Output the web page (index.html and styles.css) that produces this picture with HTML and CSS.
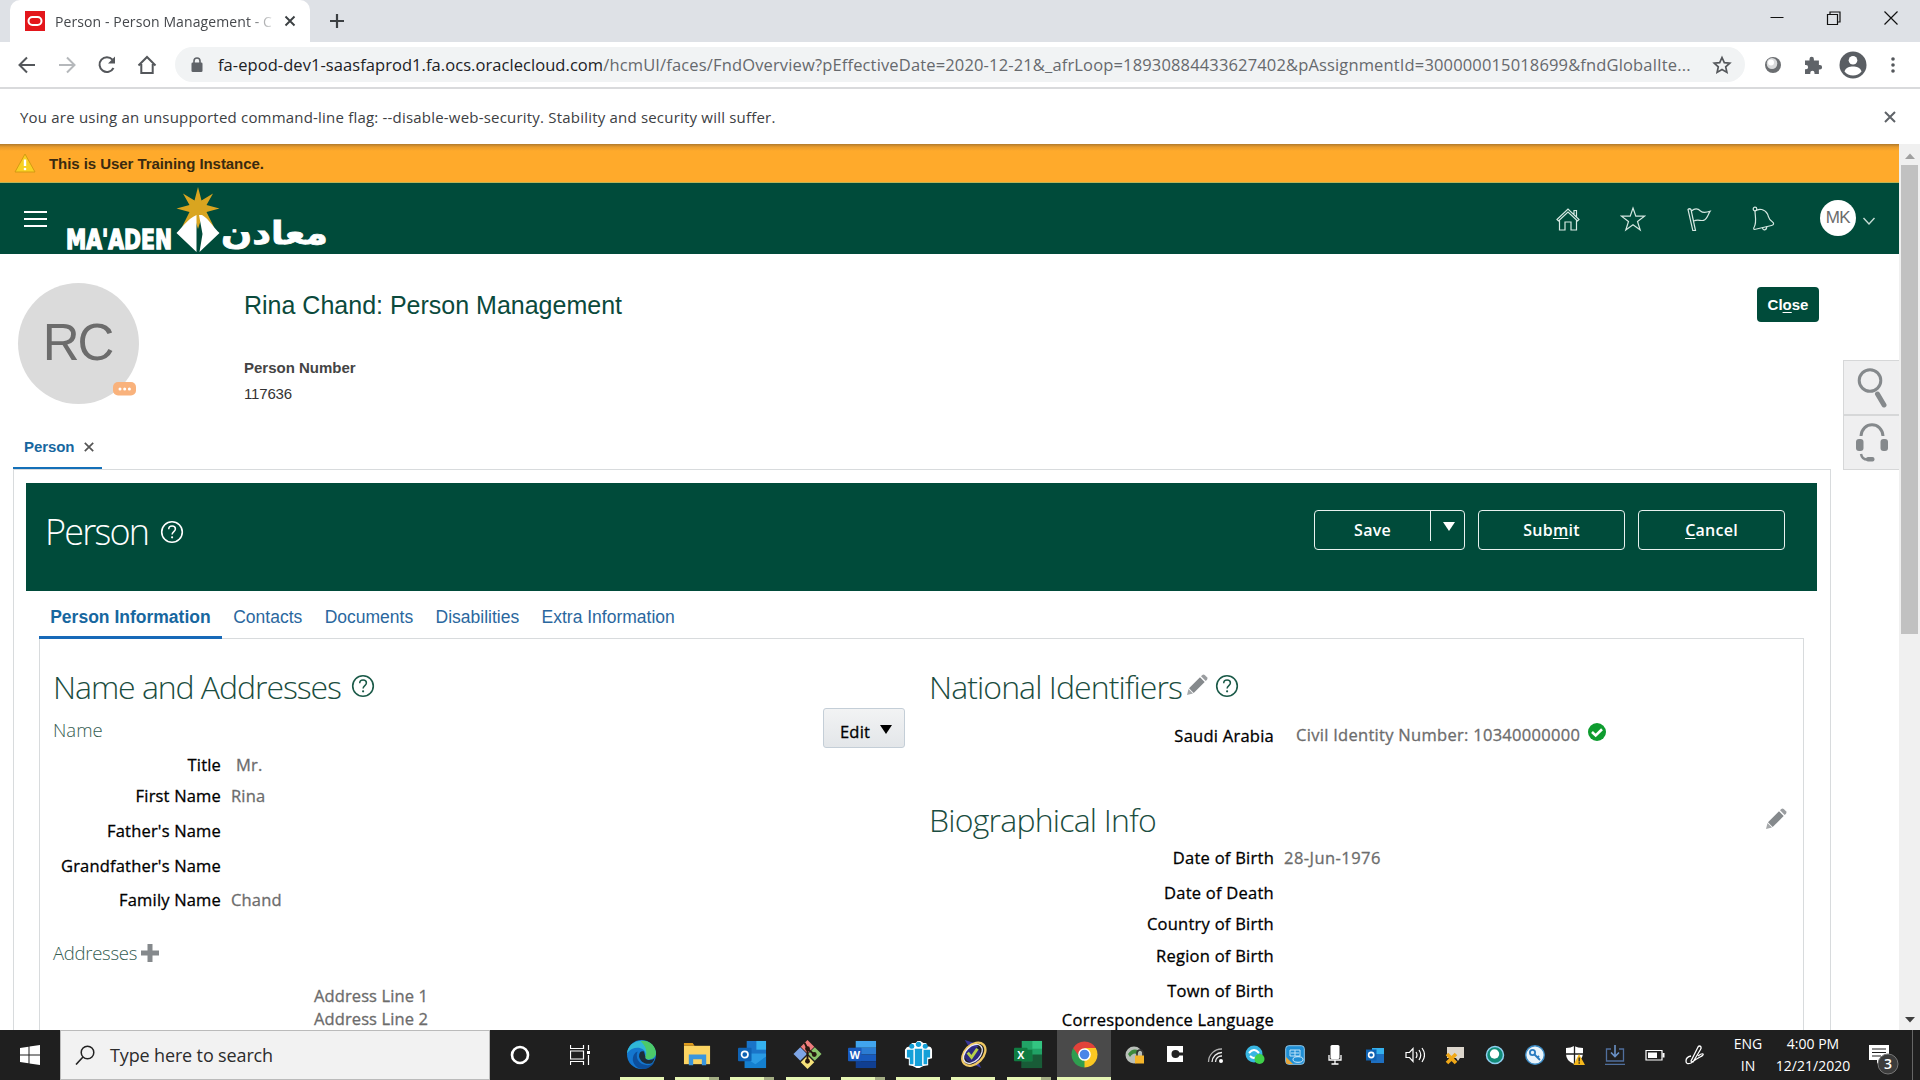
FILE: index.html
```html
<!DOCTYPE html>
<html lang="en">
<head>
<meta charset="utf-8">
<title>Person - Person Management</title>
<link rel="stylesheet" href="styles.css">
</head>
<body>
<svg class="defs" width="0" height="0">
  <symbol id="pencil" viewBox="0 0 22 22"><path d="M1 21l1.500-6 4.500 4.500z" fill="#a5a8aa"/><path d="M3 14.300L14 3.300l4.700 4.700-11 11z" fill="#85898c"/><path d="M15 2.300l1.300-1.300q1.200-1 2.400 0l2.300 2.300q1 1.200 0 2.400L19.700 7z" fill="#9a9da0"/></symbol>
  <symbol id="help" viewBox="0 0 24 24"><circle cx="12" cy="12" r="10.300" fill="none" stroke="currentColor" stroke-width="1.600"/><path d="M8.700 9.300c0-2 1.500-3.200 3.400-3.200s3.300 1.200 3.300 2.900c0 2.500-3.300 2.700-3.300 5.500" fill="none" stroke="currentColor" stroke-width="1.500"/><circle cx="12.100" cy="17.300" r="1.100" fill="currentColor"/></symbol>
</svg>
<div class="screen">
  <header class="tabstrip">
    <div class="tab">
      <svg class="favicon" viewBox="0 0 20 20"><rect width="20" height="20" fill="#e3161b"/><rect x="3.500" y="6" width="13" height="8" rx="4" fill="none" stroke="#fff" stroke-width="2"/></svg>
      <span class="tab-title">Person - Person Management - C</span>
      <svg class="tab-x" viewBox="0 0 12 12"><path d="M1.500 1.500l9 9M10.500 1.500l-9 9" stroke="#3c4043" stroke-width="1.900"/></svg>
    </div>
    <svg class="newtab" viewBox="0 0 16 16"><path d="M8 1v14M1 8h14" stroke="#3c4043" stroke-width="2.200"/></svg>
    <div class="wincontrols">
      <svg viewBox="0 0 16 16"><path d="M1.500 7.500h13" stroke="#111" stroke-width="1"/></svg>
      <svg viewBox="0 0 16 16"><path d="M1.500 4.500h10v10h-10zM4 4.500v-2.500h10v10h-2.500" fill="none" stroke="#111" stroke-width="1.200"/></svg>
      <svg viewBox="0 0 16 16"><path d="M1.500 1.500l13 13M14.500 1.500l-13 13" stroke="#111" stroke-width="1.200"/></svg>
    </div>
  </header>
  <div class="toolbar">
    <div class="navbtns">
      <svg viewBox="0 0 20 20"><path d="M18 10H3M10 2.500L2.500 10l7.500 7.500" fill="none" stroke="#54575b" stroke-width="2"/></svg>
      <svg viewBox="0 0 20 20"><path d="M2 10h15M10 2.500l7.500 7.500-7.500 7.500" fill="none" stroke="#b5b8bb" stroke-width="2"/></svg>
      <svg viewBox="0 0 20 20"><path d="M16.500 13A7.400 7.400 0 1 1 15.500 4.700" fill="none" stroke="#54575b" stroke-width="2"/><path d="M18 1.500v7h-7z" fill="#54575b"/></svg>
      <svg viewBox="0 0 20 20"><path d="M1.500 10.500L10 2l8.500 8.500M4.300 9v9h11.400V9" fill="none" stroke="#54575b" stroke-width="2"/></svg>
    </div>
    <div class="omnibox">
      <svg class="lock" viewBox="0 0 12 16"><rect x=".5" y="5.500" width="11" height="9.500" rx="1.300" fill="#5f6368"/><path d="M3 6V4a3 3 0 0 1 6 0v2" fill="none" stroke="#5f6368" stroke-width="1.600"/></svg>
      <span class="url"><span class="host">fa-epod-dev1-saasfaprod1.fa.ocs.oraclecloud.com</span>/hcmUI/faces/FndOverview?pEffectiveDate=2020-12-21&amp;_afrLoop=18930884433627402&amp;pAssignmentId=300000015018699&amp;fndGlobalIte...</span>
      <svg class="bm" viewBox="0 0 20 20"><path d="M10 2.500l2.300 5.100 5.500.6-4.100 3.700 1.200 5.500L10 14.600l-4.900 2.800 1.200-5.500-4.100-3.700 5.500-.6z" fill="none" stroke="#54575b" stroke-width="1.700"/></svg>
    </div>
    <div class="exts">
      <svg viewBox="0 0 20 20"><circle cx="10" cy="10" r="8" fill="#6b6e71"/><ellipse cx="9" cy="8.500" rx="5.300" ry="5.500" fill="#d9dadb"/><ellipse cx="8" cy="7.500" rx="3" ry="3" fill="#fff"/></svg>
      <svg viewBox="0 0 20 20"><path d="M2 5.500h4.500V4a2.200 2.200 0 0 1 4.400 0v1.500h5V10h1a2.200 2.200 0 0 1 0 4.400h-1v4.600h-4.400v-1.200a2.100 2.100 0 0 0-4.200 0V19H2v-4.700h1a2.100 2.100 0 0 0 0-4.200H2z" fill="#5f6368"/></svg>
      <svg class="prof" viewBox="0 0 28 28"><circle cx="14" cy="14" r="13.500" fill="#5a5e63"/><circle cx="14" cy="9.300" r="4.300" fill="#fff"/><path d="M5.500 20.500c1-4 5-5 8.500-5s7.500 1 8.500 5c-2 2.700-5 4-8.500 4s-6.500-1.300-8.500-4z" fill="#fff"/></svg>
      <svg viewBox="0 0 20 20"><g fill="#54575b"><circle cx="10" cy="4" r="1.800"/><circle cx="10" cy="10" r="1.800"/><circle cx="10" cy="16" r="1.800"/></g></svg>
    </div>
  </div>
  <div class="infobar">
    <span>You are using an unsupported command-line flag: --disable-web-security. Stability and security will suffer.</span>
    <svg viewBox="0 0 12 12"><path d="M1 1l10 10M11 1L1 11" stroke="#5f6368" stroke-width="2"/></svg>
  </div>

  <div class="viewport">
    <div class="page">
      <div class="banner">
        <svg viewBox="0 0 22 20"><path d="M11 1L21 19H1z" fill="#f8d022" stroke="#d49a14" stroke-width="1"/><path d="M11 6.500v6.500" stroke="#fff" stroke-width="2.400"/><circle cx="11" cy="16" r="1.300" fill="#fff"/></svg>
        <span>This is User Training Instance.</span>
      </div>
      <div class="appbar">
        <div class="burger"><i></i><i></i><i></i></div>
        <svg class="logo" viewBox="0 0 270 66">
          <path d="M135 0l3.500 13.500L150 6.500l-6.500 11.500L156.500 21.500 143.500 25l7.500 15-12.500-9L135 42l-3.500-11-12.500 9 7.500-15L113.500 21.500l13-3.500L120 6.500l11.500 7z" fill="#d9a520"/>
          <path d="M133.500 28v37l-20-19c5-5 11-14 20-18z" fill="#fff"/><path d="M136 28l3 0c7 4 12 13 17.500 18L136.500 65l3-18z" fill="#fff"/>
          <text class="logo-en" x="3" y="61.500" textLength="106" lengthAdjust="spacingAndGlyphs">MA'ADEN</text>
          <text class="logo-ar" x="158" y="57" textLength="107" lengthAdjust="spacingAndGlyphs">معادن</text>
        </svg>
        <div class="appicons">
          <svg viewBox="0 0 26 26"><path d="M2 13.500L13 3l11 10.500-1.500 1.500L13 6l-9.500 9zM4.500 14v10h5.500v-8h6v8h5.500V14M19 8.500V4.500h2.500v6.500"/></svg>
          <svg viewBox="0 0 26 26"><path d="M13 2l2.800 8.200H24.500l-7 5.200 2.700 8.600L13 18.800 5.800 24l2.700-8.600-7-5.200h8.700z"/></svg>
          <svg viewBox="0 0 26 26"><path d="M2 3.500q1.500-1.500 3 0l4.500 21H6.800zM5.500 5c4-3.500 7-2 9 0 2.500 2.200 6 1.500 9.500.3-2 3-2.500 8-6.500 9-4 1-5-1.500-10.200 1"/></svg>
          <svg viewBox="0 0 26 26"><path d="M4 5c4-3 10-2 12.500 3 1.500 3.500 1 5.500 4.500 7.500 2.500 1.500 2 3.500-.5 4L3.500 23.500c-1 0-1-1.500-.3-2.500C6 16 4 10 4 5z"/><circle cx="4" cy="3" r="1.800"/><path d="M11.500 21.500c0 3.500 4.500 3 4.200-1"/></svg>
        </div>
        <div class="user">MK</div>
        <svg class="chev" viewBox="0 0 14 10"><path d="M1.500 2L7 8l5.500-6" fill="none" stroke="#c5dbd4" stroke-width="1.400"/></svg>
      </div>

      <div class="person-head">
        <div class="avatar">RC
          <svg viewBox="0 0 24 14"><rect width="23" height="13.500" rx="5" fill="#f9b27c"/><g fill="#fff"><circle cx="7" cy="7" r="1.500"/><circle cx="11.700" cy="7" r="1.500"/><circle cx="16.400" cy="7" r="1.500"/></g></svg>
        </div>
        <div class="person-meta">
          <h1>Rina Chand: Person Management</h1>
          <b>Person Number</b>
          <span class="num">117636</span>
        </div>
        <button class="close-btn">Cl<u>o</u>se</button>
      </div>
      <aside class="side">
        <div><svg viewBox="0 0 32 40"><ellipse cx="14" cy="12.500" rx="10.800" ry="10.800" fill="none" stroke="#85898c" stroke-width="3"/><path d="M21.500 26l6.500 11" stroke="#85898c" stroke-width="5" stroke-linecap="round"/></svg></div>
        <div><svg viewBox="0 0 32 40"><path d="M5 13C6-2 26-2 27 13" fill="none" stroke="#85898c" stroke-width="3"/><rect x="0" y="16" width="7.500" height="12" rx="3" fill="#85898c"/><rect x="24.500" y="16" width="7.500" height="12" rx="3" fill="#85898c"/><path d="M5 31c1 5 4 6 8 5.500" fill="none" stroke="#85898c" stroke-width="2.500"/><rect x="10" y="34" width="8.500" height="4.500" rx="2" fill="#85898c"/></svg></div>
      </aside>

      <div class="outer-tabs"><div class="otab">Person<svg viewBox="0 0 10 10"><path d="M.8.800l8.400 8.400M9.200.800L.8 9.200" stroke="#555" stroke-width="1.700"/></svg></div></div>
      <div class="outer">
        <div class="titlebar">
          <h2>Person</h2>
          <svg class="help"><use href="#help"/></svg>
          <div class="actions">
            <button class="save"><span class="lbl">Save</span><span class="arrow"><svg viewBox="0 0 12 9"><path d="M0 0h12L6 9z" fill="#fff"/></svg></span></button>
            <button>Sub<u>m</u>it</button>
            <button><u>C</u>ancel</button>
          </div>
        </div>
        <nav class="inner-tabs">
          <a class="on">Person Information</a><a>Contacts</a><a>Documents</a><a>Disabilities</a><a>Extra Information</a>
        </nav>
        <div class="inner">
          <section class="left">
            <div class="names">
              <h3>Name and Addresses<svg class="help"><use href="#help"/></svg></h3>
              <h4>Name</h4>
              <dl class="rows-name">
                <dt>Title</dt><dd class="in">Mr.</dd>
                <dt>First Name</dt><dd>Rina</dd>
                <dt>Father's Name</dt><dd></dd>
                <dt>Grandfather's Name</dt><dd></dd>
                <dt>Family Name</dt><dd>Chand</dd>
              </dl>
              <h4 class="addr-h">Addresses<svg viewBox="0 0 18 18"><path d="M9 0v18M0 9h18" stroke="#85898c" stroke-width="5"/></svg></h4>
              <div class="addr"><div>Address Line 1</div><div>Address Line 2</div></div>
            </div>
            <button class="edit">Edit<svg viewBox="0 0 12 9"><path d="M0 0h12L6 9z"/></svg></button>
          </section>
          <section class="right">
            <h3 class="nat">National Identifiers<svg class="pen"><use href="#pencil"/></svg><svg class="help"><use href="#help"/></svg></h3>
            <dl class="rows-id"><dt>Saudi Arabia</dt><dd>Civil Identity Number: 10340000000<svg viewBox="0 0 18 18"><circle cx="9" cy="9" r="9" fill="#0e9c2f"/><path d="M4 9l3.700 3.500L14 6.300" fill="none" stroke="#fff" stroke-width="2.600"/></svg></dd></dl>
            <h3 class="bio">Biographical Info<svg class="pen"><use href="#pencil"/></svg></h3>
            <dl class="rows-bio">
              <dt>Date of Birth</dt><dd class="date">28-Jun-1976</dd>
              <dt>Date of Death</dt><dd></dd>
              <dt>Country of Birth</dt><dd></dd>
              <dt>Region of Birth</dt><dd></dd>
              <dt>Town of Birth</dt><dd></dd>
              <dt>Correspondence Language</dt><dd></dd>
            </dl>
          </section>
        </div>
      </div>
    </div>
    <div class="scrollbar">
      <svg viewBox="0 0 10 6"><path d="M0 6l5-5.500L10 6z" fill="#a0a0a0"/></svg>
      <div class="thumb"></div>
      <svg class="down" viewBox="0 0 10 6"><path d="M0 0h10L5 5.500z" fill="#404040"/></svg>
    </div>
  </div>

  <footer class="taskbar">
    <div class="start"><svg viewBox="0 0 20 20"><path d="M0 3l8.500-1.200v7.700H0zM9.500 1.600L20 0v9.500H9.500zM0 10.500h8.500v7.700L0 17zM9.500 10.500H20V20L9.500 18.400z" fill="#fff"/></svg></div>
    <div class="search"><svg viewBox="0 0 20 20"><circle cx="12.500" cy="7.500" r="6.300" fill="none" stroke="#222" stroke-width="1.500"/><path d="M8 12L1 19.500" stroke="#222" stroke-width="1.600"/></svg><span>Type here to search</span></div>
    <div class="sys">
      <svg viewBox="0 0 20 20"><circle cx="10" cy="10" r="8" fill="none" stroke="#fff" stroke-width="2.600"/></svg>
      <svg viewBox="0 0 20 20"><path d="M.5 0v3.500h13V0M.5 20v-3.500h13V20M.5 6h13v8H.5zM18.500 0v5M18.500 10v10" fill="none" stroke="#fff" stroke-width="1.200"/><rect x="17" y="6" width="3" height="3" fill="#fff"/></svg>
    </div>
    <div class="apps">
      <div class="app"><svg viewBox="0 0 30 30"><circle cx="15" cy="15" r="15" fill="#1477cf"/><path d="M0 14C1-2 26-5 29.800 13c.5 8-12 9-11 4 3-9-12-13-18.800-3z" fill="#30b7d8"/><path d="M14 1c9-1.500 16 5 16 13-1 7-12 8-11 3 3-6-1-12-5-16z" fill="#4cc96a"/><path d="M11 12c-3 7 2 14 10 14 3 0 5-1 7-2.500C22 33 8 32 6 21c0-5 2-8 5-9z" fill="#0c4f9c"/><path d="M19 17c-1 4 6 5 9.500 2-.5 2-1.500 4-3 5-7 2-12-2-13-7 0-4 2-6 5-5z" fill="#1f1f1f" opacity=".85"/></svg></div>
      <div class="app multi"><svg viewBox="0 0 30 30"><path d="M1 3h9l2 3H1z" fill="#dd9a1c"/><path d="M1 6h27v19H1z" fill="#fcd462"/><path d="M6 26V15h18v11h-4.500v-6h-9v6z" fill="#3a96dd"/></svg></div>
      <div class="app multi"><svg viewBox="0 0 30 30"><rect x="9" y="1" width="20" height="20" fill="#1a74c8"/><rect x="19" y="1" width="10" height="9" fill="#35b1ee"/><path d="M7 14h22v15H7z" fill="#2a9be4"/><path d="M7 18l11 7 11-8v12H7z" fill="#1480d0"/><rect x="0" y="8" width="14" height="14" rx="1" fill="#0f62b3"/><circle cx="7" cy="15" r="3.300" fill="none" stroke="#fff" stroke-width="1.800"/></svg></div>
      <div class="app"><svg viewBox="0 0 30 30"><path d="M15 0l7 7-7 7-7-7z" fill="#ef7d7d"/><path d="M7.500 7.500l7 7-7 7-7-7z" fill="#7ea5e6"/><path d="M22.500 7.500l7 7-7 7-7-7z" fill="#8ac36b"/><path d="M15 16l7 7-7 7-7-7z" fill="#f6e27a"/><path d="M12 3l3 6v13M15 9l7 6" fill="none" stroke="#26170f" stroke-width="2"/><g fill="#26170f"><circle cx="15" cy="9" r="2.500"/><circle cx="15" cy="22" r="2.500"/><circle cx="22" cy="15" r="2.500"/></g></svg></div>
      <div class="app multi"><svg viewBox="0 0 30 30"><path d="M8 1h21v7H8z" fill="#41a5ee"/><path d="M8 8h21v7H8z" fill="#2b7cd3"/><path d="M8 15h21v7H8z" fill="#185abd"/><path d="M8 22h21v7H8z" fill="#103f91"/><rect x="0" y="8" width="14" height="14" rx="1" fill="#185abd"/><text class="offc" x="7" y="19.500">W</text></svg></div>
      <div class="app"><svg viewBox="0 0 30 30"><path d="M1 10q2-4 6-3l1-4 4 0 2-2h3l3 2h3l1 4q4-1 5 3v9l-4 1v6l-5 1-4 2h-3l-4-2-4-1v-6l-4-1z" fill="#fff"/><g fill="#14a0d8"><circle cx="8" cy="6.500" r="2.600"/><circle cx="15" cy="4.500" r="2.800"/><circle cx="22" cy="6.500" r="2.600"/><path d="M3 10h7v15H6v-7H3zM11 9h8v18h-8zM20 10h7v8h-3v7h-4z"/></g><path d="M10.500 10v16M19.500 10v16" stroke="#fff"/></svg></div>
      <div class="app"><svg viewBox="0 0 30 30"><path d="M6 0l10 3 4 4-8 3z" fill="#37379a"/><path d="M15 25l4-4 4 8z" fill="#37379a"/><circle cx="14" cy="15" r="8.500" fill="#2c2880"/><ellipse cx="15.500" cy="15" rx="14" ry="9.500" transform="rotate(-45 15 15)" fill="none" stroke="#efc964" stroke-width="2.400"/><ellipse cx="14" cy="14.500" rx="11.500" ry="7.500" transform="rotate(-45 14 14)" fill="none" stroke="#e8e6f4" stroke-width="1.300"/><path d="M9 13l4 5 6-9" fill="none" stroke="#b6d04a" stroke-width="3"/></svg></div>
      <div class="app multi"><svg viewBox="0 0 30 30"><path d="M8 1h21v28H8z" fill="#21a366"/><path d="M19 1h10v8H19z" fill="#33c481"/><path d="M8 10h11v12H8z" fill="#107c41"/><path d="M19 15h10v7H19zM8 22h21v7H8z" fill="#185c37"/><rect x="0" y="8" width="14" height="14" rx="1" fill="#107c41"/><text class="offc" x="7" y="19.500">X</text></svg></div>
      <div class="app active"><svg viewBox="0 0 30 30"><path d="M3.300 8.300A13.500 13.500 0 0 0 15 28.500L20.500 18z" fill="#2f9e4f"/><path d="M15 28.500A13.500 13.500 0 0 0 26.700 8.300H15z" fill="#fbc822"/><path d="M3.300 8.300A13.500 13.500 0 0 1 26.700 8.300H15l-6 8z" fill="#e2423a"/><circle cx="15" cy="15" r="6.500" fill="#fff"/><circle cx="15" cy="15" r="5" fill="#4a86e8"/></svg></div>
    </div>
    <div class="tray">
      <svg viewBox="0 0 20 20"><circle cx="9" cy="10" r="8.500" fill="#b9bfb9"/><path d="M3 9q5-7 11-3l-2 3q-4-2-7 3z" fill="#3e8a3e"/><path d="M12 11V8a3 3 0 0 1 6 0v3" fill="none" stroke="#333" stroke-width="1.600"/><rect x="10" y="10.500" width="9" height="8" fill="#f5b52a"/></svg>
      <svg viewBox="0 0 20 20"><rect x="2" y="1" width="16" height="16" fill="#fff"/><circle cx="10.500" cy="9" r="4" fill="#222"/><path d="M11 9h7" stroke="#222" stroke-width="3"/></svg>
      <svg viewBox="0 0 20 20"><g fill="none" stroke="#eee" stroke-width="1.300"><path d="M10.500 17A6 6 0 0 1 17 11"/><path d="M7 17A10 10 0 0 1 17 7.500"/><path d="M3.500 17A13 13 0 0 1 17 4" opacity=".7"/></g><circle cx="16" cy="16" r="2" fill="#fff"/></svg>
      <svg viewBox="0 0 20 20"><circle cx="9" cy="9" r="8.500" fill="#38b6e2"/><path d="M4 8q5-6 10 0M5 11q4 4 8 0" stroke="#fff" stroke-width="2" fill="none"/><circle cx="14.500" cy="14" r="5" fill="#3fd04a"/></svg>
      <svg viewBox="0 0 20 20"><rect x=".7" y=".7" width="18.600" height="18.600" rx="3" fill="#1f8ed4" stroke="#8fc7ea"/><path d="M1 12l7 7H3q-2 0-2-2z" fill="#e9a63a"/><path d="M5 5h10v6H5zM6 8h8M10 5v6" fill="none" stroke="#bfe4fa"/><ellipse cx="13" cy="14.500" rx="5" ry="2.800" fill="none" stroke="#d8effc"/></svg>
      <svg viewBox="0 0 20 20"><rect x="5.500" y="0" width="9" height="14" rx="1.500" fill="#fff"/><path d="M4 10v5h12v-5M10 15v4M6.500 19h7" fill="none" stroke="#fff" stroke-width="1.300"/></svg>
      <svg viewBox="0 0 20 20"><rect x="7" y="3" width="12" height="9" fill="#35b1ee"/><path d="M6 9h13v9H6z" fill="#1e6fc0"/><rect x="1" y="4.500" width="10.500" height="11" fill="#0f62b3"/><circle cx="6.200" cy="10" r="2.600" fill="none" stroke="#fff" stroke-width="1.600"/></svg>
      <svg viewBox="0 0 20 20"><path d="M1 7.500h3.500L8 3.500v13L4.500 12.500H1z" fill="none" stroke="#fff" stroke-width="1.200"/><path d="M11 7q2 3 0 6M14 5q3.500 5 0 10M17 3q5 7 0 14" fill="none" stroke="#fff" stroke-width="1.200"/></svg>
      <svg viewBox="0 0 20 20"><path d="M2 2h17v11h-4l-2 3-2-3H2z" fill="#dcd6cc"/><path d="M2 9l9 9M11 9l-9 9" stroke="#f0a818" stroke-width="3.600"/></svg>
      <svg viewBox="0 0 20 20"><circle cx="10" cy="10" r="8.500" fill="#128c78" stroke="#8fd0f0" stroke-width="1.500"/><circle cx="9.500" cy="9" r="4.700" fill="#fff"/></svg>
      <svg viewBox="0 0 20 20"><circle cx="10" cy="10" r="9.300" fill="#e9f4fb" stroke="#3a8ac4" stroke-width="1.400"/><circle cx="7.500" cy="7.500" r="2.600" fill="none" stroke="#2b7cc0" stroke-width="1.800"/><path d="M9.500 9.500l5.500 5.500m-2.500-2.500l1.500-1.500" stroke="#2b7cc0" stroke-width="1.800"/></svg>
      <svg viewBox="0 0 20 20"><path d="M1 3q5 0 8-2 4 2 9 2v6q-1 7-9 10-8-3-8-10z" fill="#fff"/><path d="M9.500 1v18M1 9h17" stroke="#1f1f1f" stroke-width="1.300"/><path d="M14 9l6 11H8.500z" fill="#f5b81c"/><path d="M14.200 12.500v4M14.200 17.300v1.500" stroke="#222" stroke-width="1.300"/></svg>
      <svg viewBox="0 0 20 20"><path d="M6 4H1.500v12h17V4H14M0 19.300h20" fill="none" stroke="#506f9d" stroke-width="1.300"/><path d="M10 0v11M6 7.500l4 4 4-4" fill="none" stroke="#6a91c6" stroke-width="1.600"/></svg>
      <svg viewBox="0 0 20 20"><path d="M1 5.500h16v9.500H1z" fill="none" stroke="#fff" stroke-width="1.200"/><rect x="3" y="7.500" width="9" height="5.500" fill="#fff"/><rect x="17.500" y="8" width="2" height="4.500" fill="#fff"/></svg>
      <svg viewBox="0 0 20 20"><path d="M6 16L13 2q1.500-2 3 0 .5 1-.5 2.500L8 17zM6 11q-5 1-5 5t5 2q5-4 9-6t3-3-5 2" fill="none" stroke="#fff" stroke-width="1.300"/></svg>
    </div>
    <div class="lang"><span>ENG</span><span>IN</span></div>
    <div class="clock"><span>4:00 PM</span><span>12/21/2020</span></div>
    <div class="notif"><svg viewBox="0 0 32 32"><path d="M1 1h20v15h-9l-3 4v-4H1z" fill="#fff"/><path d="M4 5h14M4 8.500h14M4 12h9" stroke="#1f1f1f" stroke-width="1.200"/><circle cx="20" cy="20" r="10" fill="#3c3c3c" stroke="#777"/><text x="20" y="25">3</text></svg></div>
  </footer>
</div>
</body>
</html>
```
FILE: styles.css
```css
* { box-sizing: border-box; }
body { margin: 0; overflow: hidden; font-family: "Open Sans", "Noto Sans", sans-serif; }
h1, h2, h3, h4, dl, dd { margin: 0; font-weight: normal; }
button { font: inherit; padding: 0; }
svg { display: block; flex: none; }
.defs { position: absolute; }
.screen { width: 1920px; height: 1080px; display: flex; flex-direction: column; background: #fff; overflow: hidden; white-space: nowrap; }
.help { width: 24px; height: 24px; }

/* browser chrome */
.tabstrip { height: 42px; background: #dee1e6; display: flex; align-items: center; padding-left: 10px; flex: none; }
.tab { width: 300px; height: 42px; background: #fff; border-radius: 10px 10px 0 0; display: flex; align-items: center; padding-left: 15px; }
.favicon { width: 20px; height: 20px; }
.tab-title { width: 218px; margin-left: 10px; overflow: hidden; font-size: 14px; letter-spacing: .1px; color: #45484c; -webkit-mask-image: linear-gradient(90deg, #000 88%, transparent 102%); mask-image: linear-gradient(90deg, #000 88%, transparent 102%); }
.tab-x { width: 12px; height: 12px; margin-left: 11px; }
.newtab { width: 16px; height: 16px; margin-left: 19px; }
.wincontrols { margin-left: auto; display: flex; gap: 41px; padding: 0 21px 6px 0; }
.wincontrols svg { width: 16px; height: 16px; }
.toolbar { height: 47px; border-bottom: 2px solid #d9dadc; display: flex; align-items: center; flex: none; }
.navbtns { display: flex; gap: 20px; width: 175px; padding-left: 17px; }
.navbtns svg { width: 20px; height: 20px; }
.omnibox { width: 1570px; height: 35px; border-radius: 18px; background: #f1f3f4; display: flex; align-items: center; padding-left: 16px; }
.lock { width: 12px; height: 16px; }
.url { margin-left: 15px; width: 1476px; font-size: 16.500px; letter-spacing: .15px; color: #66696d; }
.host { color: #202124; letter-spacing: .06px; }
.bm { width: 20px; height: 20px; margin-left: 18px; }
.exts { display: flex; align-items: center; gap: 20px; padding-left: 18px; }
.exts svg { width: 20px; height: 20px; }
.exts .prof { width: 28px; height: 28px; margin: 0 -4px; }
.infobar { height: 55px; flex: none; display: flex; align-items: center; justify-content: space-between; padding: 0 24px 0 20px; font-size: 15px; letter-spacing: .2px; color: #3c4043; }
.infobar svg { width: 12px; height: 12px; }

/* application */
.viewport { height: 886px; display: flex; overflow: hidden; flex: none; }
.page { width: 1899px; position: relative; overflow: hidden; }
.banner { height: 39px; background: linear-gradient(#b07a2c 0, #e89b2c 3px, #ffaa2b 7px); border-bottom: 1px solid #b9b457; display: flex; align-items: center; padding-left: 14px; font: bold 15px "Liberation Sans", sans-serif; letter-spacing: -.06px; color: #3a2a10; gap: 13px; }
.banner svg { width: 22px; height: 20px; }
.appbar { height: 71px; background: #004b3a; display: flex; align-items: center; padding-left: 24px; }
.burger { width: 23px; display: grid; gap: 5px; }
.burger i { height: 2px; background: #fff; }
.logo { width: 270px; height: 66px; margin-left: 16px; margin-top: 2px; overflow: visible; }
.logo-en { font: bold 27px "DejaVu Sans Condensed", "DejaVu Sans", sans-serif; fill: #fff; stroke: #fff; stroke-width: 1.400px; }
.logo-ar { font: bold 31px "DejaVu Sans", sans-serif; fill: #fff; stroke: #fff; stroke-width: .8px; }
.appicons { display: flex; gap: 39.300px; margin-left: 1222px; }
.appicons svg { width: 26px; height: 26px; fill: none; stroke: #d5e8e2; stroke-width: 1.200; }
.user { width: 36px; height: 36px; border-radius: 50%; background: #fff; margin-left: 43px; margin-top: -2px; font: 17px/36px "Liberation Sans", sans-serif; color: #6b6b6b; text-align: center; letter-spacing: -.6px; }
.chev { width: 14px; height: 10px; margin-left: 6px; margin-top: 4px; }
.person-head { height: 182px; display: flex; font-family: "Liberation Sans", sans-serif; }
.avatar { width: 121px; height: 121px; margin: 29px 0 0 18px; border-radius: 50%; background: #dbdbdb; color: #6c6c6c; font-size: 51px; line-height: 119px; text-align: center; letter-spacing: -2px; padding-right: 2px; position: relative; }
.avatar svg { position: absolute; right: 2px; bottom: 8px; width: 24px; height: 14px; }
.person-meta { margin-left: 105px; display: flex; flex-direction: column; }
.person-meta h1 { font-size: 25px; line-height: 30px; margin-top: 35.500px; color: #0b4a3c; }
.person-meta b { font-size: 15px; line-height: 20px; margin-top: 38.500px; color: #444; }
.num { font-size: 15px; line-height: 20px; margin-top: 6px; color: #333; letter-spacing: -.16px; }
.close-btn { margin: 33px 80px 0 auto; width: 62px; height: 35px; border: 0; border-radius: 4px; background: #004b3a; color: #fff; font-weight: bold; font-size: 15px; }
.side { position: absolute; right: 0; top: 216px; width: 56px; }
.side div { height: 55px; background: #efeff0; border: 1px solid #d6d7d8; border-right: 0; display: grid; place-items: center; }
.side svg { width: 32px; height: 40px; }
.outer-tabs { margin-left: 13px; height: 34px; }
.otab { width: 89px; height: 34px; border-bottom: 3px solid #1470b8; display: flex; align-items: center; padding: 0 0 10px 11px; font: bold 15px "Liberation Sans", sans-serif; letter-spacing: -.1px; color: #17679f; }
.otab svg { width: 10px; height: 10px; margin-left: 10px; }
.outer { margin: -1px 68px 0 13px; border: 1px solid #d8dbdd; height: 700px; padding: 13px 13px 0 12px; }
.titlebar { height: 108px; background: #004b3a; color: #fff; display: flex; }
.titlebar h2 { font-size: 36px; font-weight: 300; line-height: 50px; letter-spacing: -1.800px; margin: 24px 0 0 19px; }
.titlebar .help { margin: 37px 0 0 12px; }
.actions { margin: 27px 32px 0 auto; display: flex; gap: 13px; }
.actions button { width: 147px; height: 40px; border: 1.500px solid #e8f2ef; border-radius: 4px; background: none; color: #fff; font-weight: 600; font-size: 16px; letter-spacing: .25px; }
.actions u, .close-btn u { text-underline-offset: 2px; }
.actions .save { width: 151px; display: flex; }
.save .lbl { width: 116px; height: 30px; border-right: 1px solid #e8f2ef; padding-top: 8px; }
.save .arrow { padding: 11px 0 0 12px; }
.save svg { width: 12px; height: 9px; }
.inner-tabs { height: 48px; display: flex; margin-left: 13px; font: 17.500px/20px "Liberation Sans", sans-serif; color: #2a679e; }
.inner-tabs a { padding: 16px 11.200px 0; }
.inner-tabs .on { width: 183px; height: 48px; font-weight: bold; color: #17679f; border-bottom: 3px solid #1769b8; }
.inner { margin: -1px 13px 0; border: 1px solid #d8dbdd; height: 500px; padding: 24px 16px 0 13px; display: flex; color: #000; font-size: 16.500px; letter-spacing: .25px; }
.left { width: 876px; display: flex; }
.names { width: 770px; }
h3 { font-size: 32px; font-weight: 300; line-height: 47px; height: 44px; letter-spacing: -1.060px; color: #1b4d40; display: flex; }
.nat { letter-spacing: -.92px; }
h3 .help { margin: 11px 0 0 10px; color: #1b5a48; }
.pen { width: 22px; height: 22px; margin: 11px 0 0 4px; }
.right { flex: 1; }
.right .pen + .help { margin-left: 7px; }
h4 { font-size: 18.500px; font-weight: 300; line-height: 24px; letter-spacing: 0; color: #355d52; margin: 11px 0 10px; }
dl { display: grid; line-height: 26px; }
dt { text-align: right; -webkit-text-stroke: .3px #000; }
dd { padding-left: 10px; color: #6c6c6c; -webkit-text-stroke: .3px #6c6c6c; }
dd.in { padding-left: 15px; }
.date { letter-spacing: .45px; }
.rows-name { grid-template: 31px 35px 35px 34px 24px / 168px auto; letter-spacing: .18px; }
.addr-h { display: flex; margin: 29px 0 21px; line-height: 26px; height: 24px; letter-spacing: -.28px; }
.addr-h svg { width: 18px; height: 18px; margin: 4px 0 0 4px; }
.addr { padding-left: 261px; line-height: 22.500px; color: #6c6c6c; letter-spacing: .1px; -webkit-text-stroke: .3px #6c6c6c; }
.edit { width: 82px; height: 40px; margin-top: 45px; border: 1px solid #c4ced7; border-radius: 3px; background: linear-gradient(#f2f3f4, #e3e6e9); display: flex; padding: 11px 0 0 16px; line-height: 24px; color: #000; letter-spacing: .2px; -webkit-text-stroke: .3px #000; }
.edit svg { width: 12px; height: 9px; margin: 5px 0 0 10px; }
.rows-id { grid-template: 24px / 345px auto; margin-top: 16px; }
.rows-id dd { padding-left: 22px; display: flex; line-height: 24px; letter-spacing: .29px; }
.rows-id svg { width: 18px; height: 18px; margin-left: 8px; }
.bio { margin-top: 49px; letter-spacing: -.78px; }
.bio .pen { margin: 12px 0 0 auto; }
.rows-bio { grid-template: 35px 31px 32px 35px 29px 24px / 345px auto; margin-top: 5px; }
.scrollbar { width: 21px; background: #f0f0f0; display: flex; flex-direction: column; align-items: center; padding: 9px 0 7px; }
.scrollbar svg { width: 10px; height: 6px; }
.thumb { width: 17px; height: 469px; background: #c1c1c1; margin-top: 6px; }
.scrollbar .down { margin-top: auto; }

/* taskbar */
.taskbar { height: 50px; background: #1f1f1f; display: flex; color: #fff; flex: none; }
.start { width: 60px; display: grid; place-items: center; }
.start svg { width: 20px; height: 20px; }
.search { width: 430px; background: #f2f2f2; border: 1px solid #bbb; display: flex; align-items: center; padding-left: 14px; gap: 15px; color: #2c2c2c; font-size: 18px; letter-spacing: -.14px; }
.search svg { width: 20px; height: 20px; }
.sys { display: flex; align-items: center; gap: 40px; padding-left: 20px; width: 124px; }
.sys svg { width: 20px; height: 20px; }
.apps { display: flex; gap: 1.600px; width: 497px; padding-left: 1px; }
.app { width: 54px; display: flex; flex-direction: column; align-items: center; padding-top: 10px; }
.app svg { width: 29px; height: 29px; }
.app::after { content: ""; width: 44px; height: 3px; margin-top: auto; background: #e6f5b4; }
.app.multi::after { background: linear-gradient(90deg, #e6f5b4 34px, #a4ae84 34px); }
.app.active { background: #4a4a4a; }
.app.active::after { width: 54px; }
.offc { font: bold 11px "Open Sans", sans-serif; fill: #fff; text-anchor: middle; }
.tray { display: flex; align-items: center; gap: 20px; padding-left: 14px; width: 599px; margin-right: 13px; }
.tray svg { width: 20px; height: 20px; }
.lang, .clock { display: flex; flex-direction: column; align-items: center; font-size: 14px; line-height: 22px; padding-top: 3px; }
.lang { width: 50px; }
.clock { width: 80px; }
.notif { margin-left: 15px; padding-top: 14px; border-right: 1px solid #666; width: 45px; }
.notif svg { width: 32px; height: 32px; }
.notif text { font: 600 14px "Open Sans", sans-serif; fill: #fff; text-anchor: middle; }
```
